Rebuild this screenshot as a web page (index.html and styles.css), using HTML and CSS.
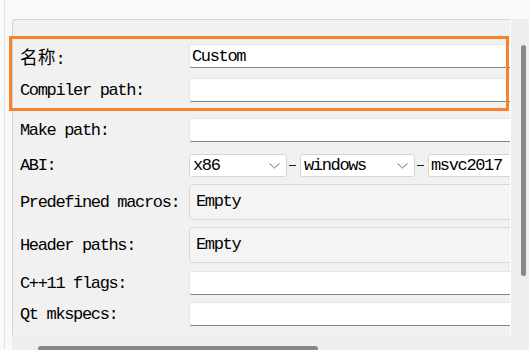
FILE: index.html
```html
<!DOCTYPE html>
<html>
<head>
<meta charset="utf-8">
<link rel="stylesheet" href="styles.css">
</head>
<body>
<div class="window">
  <div class="rail"><div class="rail-line"></div></div>
  <div class="scrollarea">
    <div class="viewport">
      <div class="form">
        <div class="row r1">
          <div class="label"><span class="cjk">名称</span>:</div>
          <div class="field">Custom</div>
        </div>
        <div class="row r2">
          <div class="label">Compiler path:</div>
          <div class="field"></div>
        </div>
        <div class="row r3">
          <div class="label">Make path:</div>
          <div class="field"></div>
        </div>
        <div class="row r4">
          <div class="label">ABI:</div>
          <div class="combos">
            <div class="combo c1"><span>x86</span><svg class="chev" width="11" height="6" viewBox="0 0 11 6"><polyline points="0.5,0.5 5.5,5 10.5,0.5" fill="none" stroke="#6b6b6b" stroke-width="1"/></svg></div>
            <span class="sep"></span>
            <div class="combo c2"><span>windows</span><svg class="chev" width="11" height="6" viewBox="0 0 11 6"><polyline points="0.5,0.5 5.5,5 10.5,0.5" fill="none" stroke="#6b6b6b" stroke-width="1"/></svg></div>
            <span class="sep"></span>
            <div class="combo c3"><span>msvc2017</span></div>
          </div>
        </div>
        <div class="row r5">
          <div class="label">Predefined macros:</div>
          <div class="box">Empty</div>
        </div>
        <div class="row r6">
          <div class="label">Header paths:</div>
          <div class="box">Empty</div>
        </div>
        <div class="row r7">
          <div class="label">C++11 flags:</div>
          <div class="field"></div>
        </div>
        <div class="row r8">
          <div class="label">Qt mkspecs:</div>
          <div class="field"></div>
        </div>
      </div>
    </div>
    <div class="vscroll"><div class="vthumb"></div></div>
    <div class="hscroll"><div class="hthumb"></div></div>
    <div class="corner"></div>
  </div>
  <div class="highlight"></div>
</div>
</body>
</html>
```
FILE: styles.css
```css
html, body {
  margin: 0;
  padding: 0;
}
body {
  background: #f9f9f9;
  font-family: "Liberation Mono", "Noto Sans CJK SC", monospace;
  font-size: 17px;
  letter-spacing: -1.35px;
  color: #000;
}
.window {
  position: relative;
  display: flex;
  width: 529px;
  height: 350px;
  overflow: hidden;
  background: #f9f9f9;
}
.rail {
  flex: none;
  width: 12px;
  padding-left: 4px;
  box-sizing: border-box;
}
.rail-line {
  width: 1px;
  height: 100%;
  background: #e3e3e3;
}
.scrollarea {
  margin-top: 19px;
  display: grid;
  grid-template-columns: 499px 18px;
  grid-template-rows: 316px 15px;
  background: #eeeeee;
}
.viewport {
  box-sizing: border-box;
  border-top: 1px solid #d4d4d4;
  border-left: 1px solid #d4d4d4;
  border-right: 1px solid #ffffff;
  border-top-left-radius: 4px;
  background: #f1f1f1;
  overflow: hidden;
}
.form {
  padding: 24px 0 0 7px;
  width: max-content;
}
.row {
  display: flex;
  align-items: center;
}
.label {
  flex: none;
  width: 169px;
  white-space: nowrap;
}
.cjk {
  font-family: "Noto Sans CJK SC", sans-serif;
  font-size: 17.7px;
  letter-spacing: 0;
}
.r1 { height: 24px; }
.r2 { height: 24px; margin-top: 10px; }
.r3 { height: 24px; margin-top: 16px; }
.r4 { height: 23px; margin-top: 12px; }
.r5 { height: 36px; margin-top: 7px; }
.r6 { height: 36px; margin-top: 7px; }
.r7 { height: 24px; margin-top: 8px; }
.r8 { height: 24px; margin-top: 7px; }
.field {
  box-sizing: border-box;
  width: 340px;
  height: 24px;
  background: #fff;
  border: 1px solid #e6e6e6;
  border-bottom-color: #868686;
  border-radius: 3px;
  padding-left: 2px;
  display: flex;
  align-items: center;
}
.combos {
  display: flex;
  align-items: center;
}
.combo {
  box-sizing: border-box;
  height: 23px;
  background: #fff;
  border: 1px solid #d6d6d6;
  border-radius: 3px;
  padding: 0 6px 0 3px;
  display: flex;
  align-items: center;
  justify-content: space-between;
}
.c1 { width: 98px; }
.c2 { width: 115px; }
.c3 { width: 120px; padding-left: 2px; }
.chev { display: block; }
.sep {
  width: 7px;
  height: 1px;
  background: #1a1a1a;
  margin: 0 4px 0 2px;
}
.box {
  box-sizing: border-box;
  width: 340px;
  height: 36px;
  background: #f4f4f4;
  border: 1px solid #d8d8d8;
  border-radius: 4px;
  padding: 0 0 2px 6px;
  display: flex;
  align-items: center;
}
.vscroll {
  grid-column: 2;
  grid-row: 1;
}
.vthumb {
  margin: 26px 0 0 10px;
  width: 5px;
  height: 231px;
  background: #888;
  border-radius: 3px;
}
.hscroll {
  grid-column: 1;
  grid-row: 2;
}
.hthumb {
  margin: 11px 0 0 26px;
  width: 280px;
  height: 5px;
  background: #888;
  border-radius: 3px;
}
.corner {
  grid-column: 2;
  grid-row: 2;
}
.highlight {
  position: absolute;
  left: 9px;
  top: 36px;
  width: 500px;
  height: 75px;
  box-sizing: border-box;
  border: 3px solid #fb802c;
}
```
